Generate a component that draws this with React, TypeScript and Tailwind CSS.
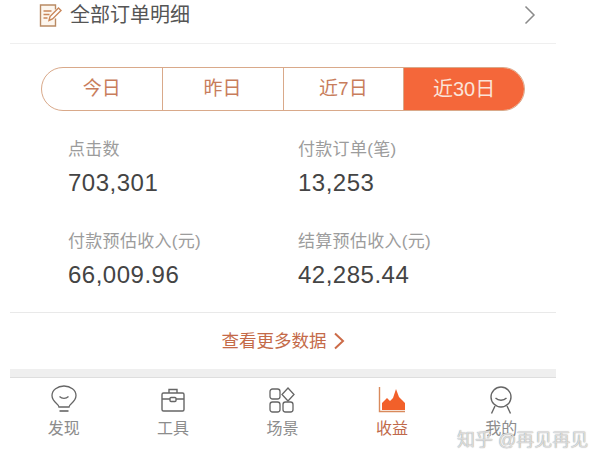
const stats = [
  { label: '点击数', value: '703,301' },
  { label: '付款订单(笔)', value: '13,253' },
  { label: '付款预估收入(元)', value: '66,009.96' },
  { label: '结算预估收入(元)', value: '42,285.44' },
];

const ranges = ['今日', '昨日', '近7日', '近30日'];

function NoteIcon() {
  return (
    <svg width="24" height="25" viewBox="0 0 24 24" fill="none" stroke="#b98a63" strokeWidth="1.400">
      <path d="M17.500 6V1.500h-15v21h15V15" fill="#fdf6ee" />
      <path d="M5.500 7.500h8M5.500 11h6M5.500 14.500h4" stroke="#c9875a" />
      <path d="M11 17l1-4 8.500-8.500 2.500 2.500-8.500 8.500z" stroke="#c9875a" fill="#fff" />
    </svg>
  );
}

function BulbIcon() {
  return (
    <svg width="28" height="30" viewBox="0 0 28 30" fill="none" stroke="#666" strokeWidth="1.300">
      <path d="M9 22c0-3-7-5-7-11.500C2 5 7.500 1 14 1s12 4 12 9.500C26 17 19 19 19 22z" />
      <path d="M9.500 26h9" strokeWidth="1.600" />
      <path d="M9.500 11.500c2.500 2.400 6.500 2.400 9 0" />
    </svg>
  );
}

function CaseIcon() {
  return (
    <svg width="26" height="24" viewBox="0 0 26 24" fill="none" stroke="#666" strokeWidth="1.400">
      <rect x="2" y="5" width="22" height="18" rx="1.500" />
      <path d="M9 5V1.500h8V5M2 11h8M16 11h8" />
      <rect x="10" y="9.500" width="6" height="4" rx="1" />
    </svg>
  );
}

function GridIcon() {
  return (
    <svg width="26" height="26" viewBox="0 0 26 26" fill="none" stroke="#666" strokeWidth="1.300">
      <rect x="1" y="2" width="10" height="10" rx="2.500" />
      <path d="M19 1l6 6.500-6 6.500-6-6.500z" />
      <rect x="1" y="15" width="10" height="10" rx="2.500" />
      <rect x="14" y="15" width="10" height="10" rx="2.500" />
    </svg>
  );
}

function ChartIcon() {
  return (
    <svg width="28" height="26" viewBox="0 0 28 26" fill="none">
      <path d="M1.500 0v24.500H27" stroke="#d98a5c" strokeWidth="1.400" />
      <path d="M4 23v-7l5-5 3 3 3-3 3-9 3 8 3 3 3 3v7z" fill="#f2602a" />
    </svg>
  );
}

function FaceIcon() {
  return (
    <svg width="24" height="29" viewBox="0 0 24 29" fill="none" stroke="#666" strokeWidth="1.400">
      <circle cx="12" cy="11" r="10" />
      <path d="M6.500 12c3 3 8 3 11 0" />
      <path d="M6 20l-3.500 7.500M18 20l3.500 7.500" />
    </svg>
  );
}

const tabs = [
  { label: '发现', icon: <BulbIcon /> },
  { label: '工具', icon: <CaseIcon /> },
  { label: '场景', icon: <GridIcon /> },
  { label: '收益', icon: <ChartIcon />, active: true },
  { label: '我的', icon: <FaceIcon /> },
];

export default function App() {
  return (
    <div className="relative h-[464px] w-[600px] overflow-hidden bg-white font-['Liberation_Sans','Noto_Sans_CJK_SC',sans-serif]">
      <div className="ml-[10px] w-[546px]">
        <div className="flex h-[44px] items-start justify-between border-b border-[#efefef] pt-[2px] pl-[28px] pr-[20px]">
          <div className="flex items-center gap-[8px]">
            <NoteIcon />
            <span className="text-[20px] leading-[26px] text-[#555]">全部订单明细</span>
          </div>
          <svg width="12" height="20" viewBox="0 0 12 20" fill="none" stroke="#8a8a8a" strokeWidth="1.500" className="mt-[3px]">
            <path d="M1.500 1.500L10 10l-8.500 8.500" />
          </svg>
        </div>

        <div className="mt-[23px] ml-[31px] flex h-[44px] w-[484px] overflow-hidden rounded-full border border-[#d9a98a]">
          {ranges.map((r, i) => (
            <div
              key={r}
              className={
                i === 3
                  ? 'flex flex-1 items-center justify-center bg-[#f4673a] text-[20px] text-[#fbe3d8]'
                  : 'flex flex-1 items-center justify-center border-r border-[#d9a98a] text-[19px] text-[#c87d5c]'
              }
            >
              {r}
            </div>
          ))}
        </div>

        <div className="mt-[27px] ml-[58px] grid grid-cols-[230px_1fr] gap-y-[33px]">
          {stats.map((s) => (
            <div key={s.label}>
              <div className="text-[17px] leading-[24px] tracking-[0.3px] text-[#9c9c9c]">{s.label}</div>
              <div className="mt-[7px] text-[24px] leading-[28px] tracking-[0.5px] text-[#444]">{s.value}</div>
            </div>
          ))}
        </div>

        <div className="mt-[23px] flex h-[57px] items-center justify-center gap-[6px] border-t border-[#e9e9e9]">
          <span className="text-[17.5px] text-[#c46a48]">查看更多数据</span>
          <svg width="12" height="18" viewBox="0 0 12 18" fill="none" stroke="#cc6b48" strokeWidth="2">
            <path d="M2 1.500L10 9l-8 7.500" />
          </svg>
        </div>

        <div className="h-[9px] border-b border-[#dedede] bg-[#efefef]" />

        <div className="-ml-px mt-[7px] grid w-[547px] grid-cols-5">
          {tabs.map((t) => (
            <div key={t.label} className="flex flex-col items-center">
              <div className="flex h-[30px] items-center">{t.icon}</div>
              <span className={t.active ? 'mt-[2px] text-[16px] leading-[24px] text-[#c0694a]' : 'mt-[2px] text-[16px] leading-[24px] text-[#8c8c8c]'}>
                {t.label}
              </span>
            </div>
          ))}
        </div>
      </div>

      <div className="absolute left-[457px] top-[428px] text-[18px] leading-[24px] text-[#f2f2f2]/80 [text-shadow:0_0_1px_#777]">知乎 @再见再见</div>
    </div>
  );
}
